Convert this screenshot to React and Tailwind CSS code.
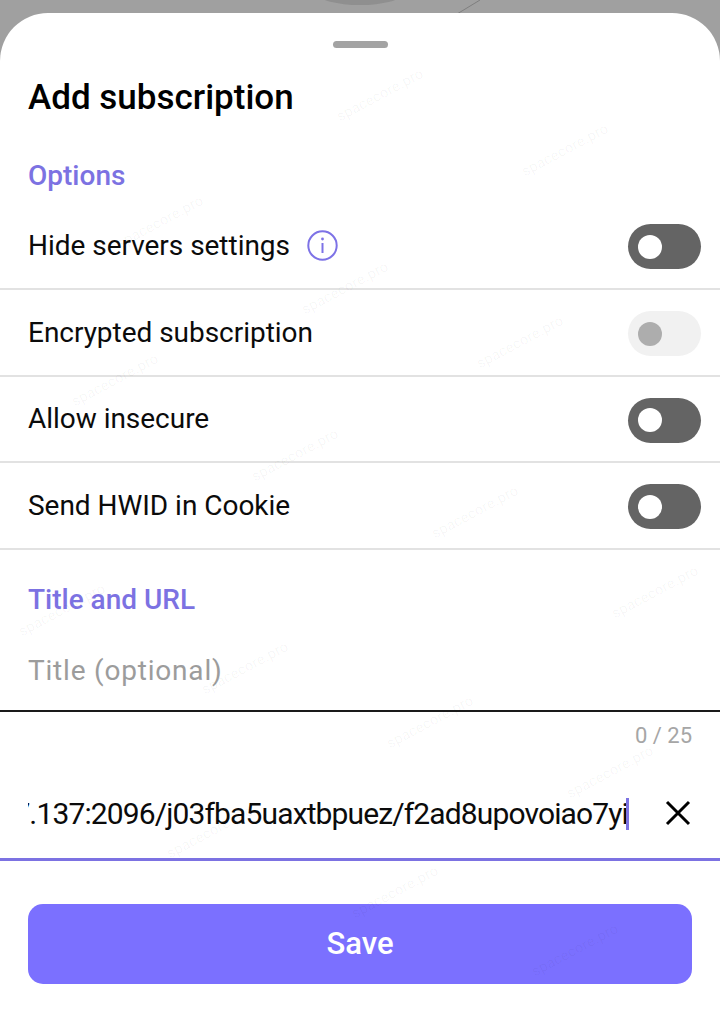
import React from "react";

const font = "font-['Roboto','Liberation_Sans',sans-serif]";

const marks = [
  [380, 95], [565, 150], [160, 222], [345, 288], [520, 342], [115, 380], [295, 455],
  [475, 512], [655, 592], [62, 610], [245, 668], [430, 722], [610, 772], [210, 832],
  [395, 892], [575, 950],
];

function Toggle({ disabled }) {
  return (
    <div className={`flex h-[45px] w-[73px] items-center rounded-full pl-[10px] ${disabled ? "bg-[#f1f1f1]" : "bg-[#646464]"}`}>
      <div className={`h-[24px] w-[24px] rounded-full ${disabled ? "bg-[#adadad]" : "bg-white"}`} />
    </div>
  );
}

function Row({ label, info, disabled, short }) {
  return (
    <div className={`flex items-center justify-between border-b-2 border-[#e2e2e2] pt-[2px] pl-7 pr-[19px] ${short ? "h-[86px]" : "h-[87px]"}`}>
      <div className="-mt-[2px] flex items-center gap-[17px]">
        <span className="text-[28px] leading-none tracking-[-0.03px] text-[#0b0b0b]">{label}</span>
        {info && (
          <svg width="31" height="31" viewBox="0 0 31 31" fill="none" stroke="#7d72e6" strokeWidth="2">
            <circle cx="15.5" cy="15.5" r="14.2" />
            <path d="M15.5 13v10" />
            <circle cx="15.5" cy="9" r="1.4" fill="#7d72e6" stroke="none" />
          </svg>
        )}
      </div>
      <Toggle disabled={disabled} />
    </div>
  );
}

export default function App() {
  return (
    <div className={`${font} relative h-[1020px] w-[720px] overflow-hidden bg-[#a0a0a0]`}>
      <svg className="absolute top-0 left-0" width="720" height="14" viewBox="0 0 720 14" fill="none">
        <ellipse cx="360" cy="-6" rx="42" ry="11" fill="#8f8f8f" />
        <path d="M457 14L480 0" stroke="#7f7f7f" strokeWidth="1" />
      </svg>
      <div className="relative mt-[13px] flex h-[1007px] flex-col rounded-t-[48px] bg-white">
        <div className="mx-auto mt-[28px] h-[7px] w-[55px] rounded-full bg-[#a3a3a3]" />
        <h1 className="mt-[29px] pl-7 text-[35px] leading-[42px] font-medium text-black">Add subscription</h1>
        <div className="mt-[41px] pl-7 text-[28px] leading-[32px] font-medium text-[#7c72e2]">Options</div>
        <div className="mt-[11px] flex flex-col">
          <Row label="Hide servers settings" info />
          <Row label="Encrypted subscription" disabled />
          <Row label="Allow insecure" short />
          <Row label="Send HWID in Cookie" />
        </div>
        <div className="mt-[34px] pl-7 text-[28px] leading-[32px] font-medium text-[#7c72e2]">Title and URL</div>
        <div className="mt-[37px] flex h-[59px] items-start border-b-2 border-[#1a1a1a] pl-7">
          <span className="text-[28px] leading-[36px] tracking-[0.8px] text-[#9c9c9c]">Title (optional)</span>
        </div>
        <div className="mt-[11px] pr-7 text-right text-[22px] leading-[26px] text-[#a6a6a6]">0 / 25</div>
        <div className="mt-[47px] flex h-[65px] items-start justify-between border-b-[3px] border-[#7c72e2] pl-7 pr-[27px]">
          <div className="flex h-[36px] w-[601px] items-center justify-end overflow-hidden">
            <span className="text-[30px] leading-[36px] tracking-[-0.87px] whitespace-nowrap text-[#0b0b0b]">47.137:2096/j03fba5uaxtbpuez/f2ad8upovoiao7yi</span>
            <span className="-ml-[2px] h-[32px] w-[3px] shrink-0 bg-[#7c72e2]" />
          </div>
          <svg className="mt-[2px]" width="30" height="30" viewBox="0 0 30 30" fill="none" stroke="#000" strokeWidth="3">
            <path d="M4 4l22 22M26 4L4 26" />
          </svg>
        </div>
        <button className="mx-7 mt-[43px] flex h-[80px] items-center justify-center rounded-[15px] bg-[#7b70ff] text-[31px] font-medium text-white">Save</button>
      </div>
      {marks.map(([x, y]) => (
        <span
          key={`${x}-${y}`}
          className="pointer-events-none absolute -translate-x-1/2 -translate-y-1/2 -rotate-[28deg] text-[15px] font-medium whitespace-nowrap text-black/[0.03]"
          style={{ left: x, top: y }}
        >
          spacecore.pro
        </span>
      ))}
    </div>
  );
}
